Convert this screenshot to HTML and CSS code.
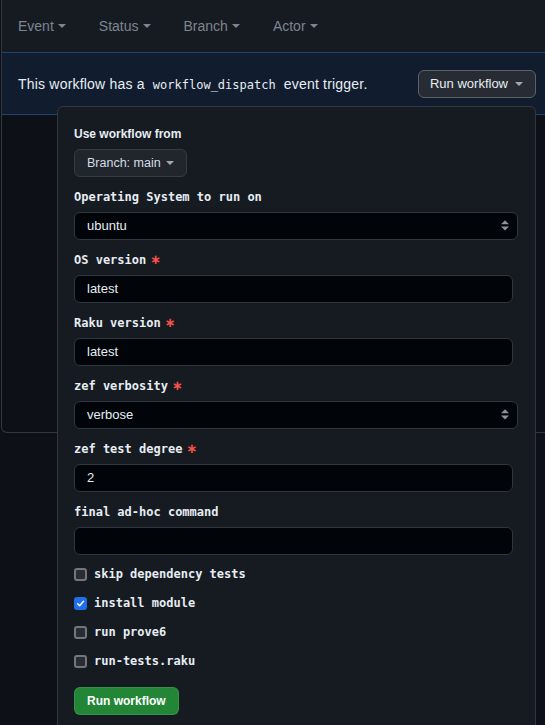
FILE: index.html
```html
<!DOCTYPE html>
<html lang="en">
<head>
<meta charset="utf-8">
<title>Workflow runs</title>
<link rel="stylesheet" href="styles.css">
</head>
<body>
<div class="box">
  <div class="box-header">
    <nav class="filters">
      <span class="filter">Event<span class="caret"></span></span>
      <span class="filter">Status<span class="caret"></span></span>
      <span class="filter">Branch<span class="caret"></span></span>
      <span class="filter">Actor<span class="caret"></span></span>
    </nav>
  </div>
  <div class="dispatch">
    <p class="dispatch-text">This workflow has a <code class="code">workflow_dispatch</code> event trigger.</p>
    <div class="dispatch-menu">
      <button class="btn btn-open" type="button">Run workflow<span class="caret caret-btn"></span></button>
      <form class="menu">
        <div class="field">
          <span class="label-sans">Use workflow from</span>
          <button class="btn btn-branch" type="button">Branch: main<span class="caret caret-branch"></span></button>
        </div>
        <div class="field">
          <span class="label">Operating System to run on</span>
          <div class="select"><span>ubuntu</span>
            <svg class="select-icon" width="8" height="11" viewBox="0 0 8 11"><path d="M0 4.2 L4 0.2 L8 4.2 Z M0 6.4 L4 10.4 L8 6.4 Z" fill="#8b949e"/></svg>
          </div>
        </div>
        <div class="field">
          <span class="label">OS version<span class="req">∗</span></span>
          <input class="input" type="text" value="latest">
        </div>
        <div class="field">
          <span class="label">Raku version<span class="req">∗</span></span>
          <input class="input" type="text" value="latest">
        </div>
        <div class="field">
          <span class="label">zef verbosity<span class="req">∗</span></span>
          <div class="select"><span>verbose</span>
            <svg class="select-icon" width="8" height="11" viewBox="0 0 8 11"><path d="M0 4.2 L4 0.2 L8 4.2 Z M0 6.4 L4 10.4 L8 6.4 Z" fill="#8b949e"/></svg>
          </div>
        </div>
        <div class="field">
          <span class="label">zef test degree<span class="req">∗</span></span>
          <input class="input" type="text" value="2">
        </div>
        <div class="field">
          <span class="label">final ad-hoc command</span>
          <input class="input" type="text" value="">
        </div>
        <label class="check"><span class="checkbox"></span>skip dependency tests</label>
        <label class="check"><span class="checkbox checked"><svg width="11" height="11" viewBox="0 0 11 11"><path d="M2 5.8 L4.4 8.2 L9.2 2.8" fill="none" stroke="#ffffff" stroke-width="1.8" stroke-linecap="round" stroke-linejoin="round"/></svg></span>install module</label>
        <label class="check"><span class="checkbox"></span>run prove6</label>
        <label class="check"><span class="checkbox"></span>run-tests.raku</label>
        <button class="btn btn-primary" type="button">Run workflow</button>
      </form>
    </div>
  </div>
  <div class="box-body"></div>
</div>
</body>
</html>
```

FILE: styles.css
```css
html, body {
  margin: 0;
  padding: 0;
  background: #0d1117;
  overflow: hidden;
}

body {
  font-family: "Liberation Sans", Arial, sans-serif;
  color: #e6edf3;
  width: 545px;
  height: 725px;
}

.box {
  margin-left: 1px;
  width: 552px;
  box-sizing: border-box;
  border: 1px solid #30363d;
  border-top: none;
  border-radius: 0 0 6px 6px;
  background: #0d1117;
}

.box-header {
  height: 52px;
  background: #161b22;
  border-bottom: 1px solid #1e4273;
  display: flex;
  align-items: center;
  padding: 0 16px;
}

.filters {
  display: flex;
  gap: 33px;
}

.filter {
  font-size: 14px;
  color: #7d8590;
  display: inline-flex;
  align-items: center;
}

.caret {
  display: inline-block;
  width: 0;
  height: 0;
  border-top: 4px solid currentColor;
  border-left: 4px solid transparent;
  border-right: 4px solid transparent;
  margin-left: 4px;
}

.dispatch {
  height: 61px;
  background: #111d2e;
  border-bottom: 1px solid #1e4273;
  display: flex;
  align-items: center;
  justify-content: space-between;
  padding: 0 16px;
}

.dispatch-text {
  margin: 0;
  font-size: 14px;
  letter-spacing: 0.2px;
  color: #e6edf3;
}

.code {
  font-family: "DejaVu Sans Mono", monospace;
  font-size: 12px;
  letter-spacing: 0;
  padding: 0 4px;
}

.dispatch-menu {
  position: relative;
}

.btn {
  box-sizing: border-box;
  height: 28px;
  display: inline-flex;
  align-items: center;
  padding: 0 12px;
  border-radius: 6px;
  font-family: "Liberation Sans", Arial, sans-serif;
  cursor: pointer;
}

.btn-open {
  background: #272c34;
  border: 1px solid #5b6169;
  color: #e6edf3;
  font-size: 13px;
  padding: 0 12px 0 11px;
}

.caret-btn {
  margin-left: 7px;
  color: #a1a8b0;
}

.menu {
  position: absolute;
  top: calc(100% + 8px);
  right: 0;
  width: 479px;
  box-sizing: border-box;
  background: #161b22;
  border: 1px solid #30363d;
  border-radius: 6px;
  padding: 17px 16px 16px;
  display: flex;
  flex-direction: column;
  gap: 10px;
  z-index: 2;
}

.field {
  display: flex;
  flex-direction: column;
  gap: 5px;
}

.label-sans {
  font: bold 12px/19px "Liberation Sans", Arial, sans-serif;
  padding-top: 1px;
  color: #e6edf3;
}

.label {
  font: bold 12px/19px "DejaVu Sans Mono", monospace;
  padding-top: 1px;
  color: #e6edf3;
}

.req {
  color: #f85149;
  font-family: "DejaVu Sans", sans-serif;
  font-size: 13px;
  line-height: 1;
  margin-left: 4px;
}

.btn-branch {
  align-self: flex-start;
  background: #21262d;
  border: 1px solid #363b42;
  color: #d6dde4;
  font-size: 12.5px;
}

.caret-branch {
  margin-left: 5px;
  color: #a1a8b0;
}

.select {
  box-sizing: border-box;
  height: 28px;
  width: 444px;
  display: flex;
  align-items: center;
  justify-content: space-between;
  padding: 0 8px 0 12px;
  background: #010409;
  border: 1px solid #30363d;
  border-radius: 6px;
  font-size: 13px;
  color: #e6edf3;
}

.input {
  box-sizing: border-box;
  height: 28px;
  width: 439px;
  padding: 0 12px;
  margin: 0;
  background: #010409;
  border: 1px solid #30363d;
  border-radius: 6px;
  font-family: "Liberation Sans", Arial, sans-serif;
  font-size: 13px;
  color: #e6edf3;
  outline: none;
}

.check {
  display: flex;
  align-items: center;
  gap: 7px;
  height: 19px;
  font: bold 12px/19px "DejaVu Sans Mono", monospace;
  color: #e6edf3;
}

.checkbox {
  box-sizing: border-box;
  width: 13px;
  height: 13px;
  border: 2px solid #74767e;
  background: #2a2c33;
  border-radius: 3px;
  display: inline-flex;
  align-items: center;
  justify-content: center;
  flex: none;
}

.checkbox.checked {
  background: #1f6feb;
  border-color: #1f6feb;
}

.btn-primary {
  align-self: flex-start;
  margin-top: 6px;
  background: #238636;
  border: 1px solid rgba(240, 246, 252, 0.1);
  color: #ffffff;
  font-size: 12px;
  font-weight: bold;
}

.box-body {
  height: 317px;
}
```
